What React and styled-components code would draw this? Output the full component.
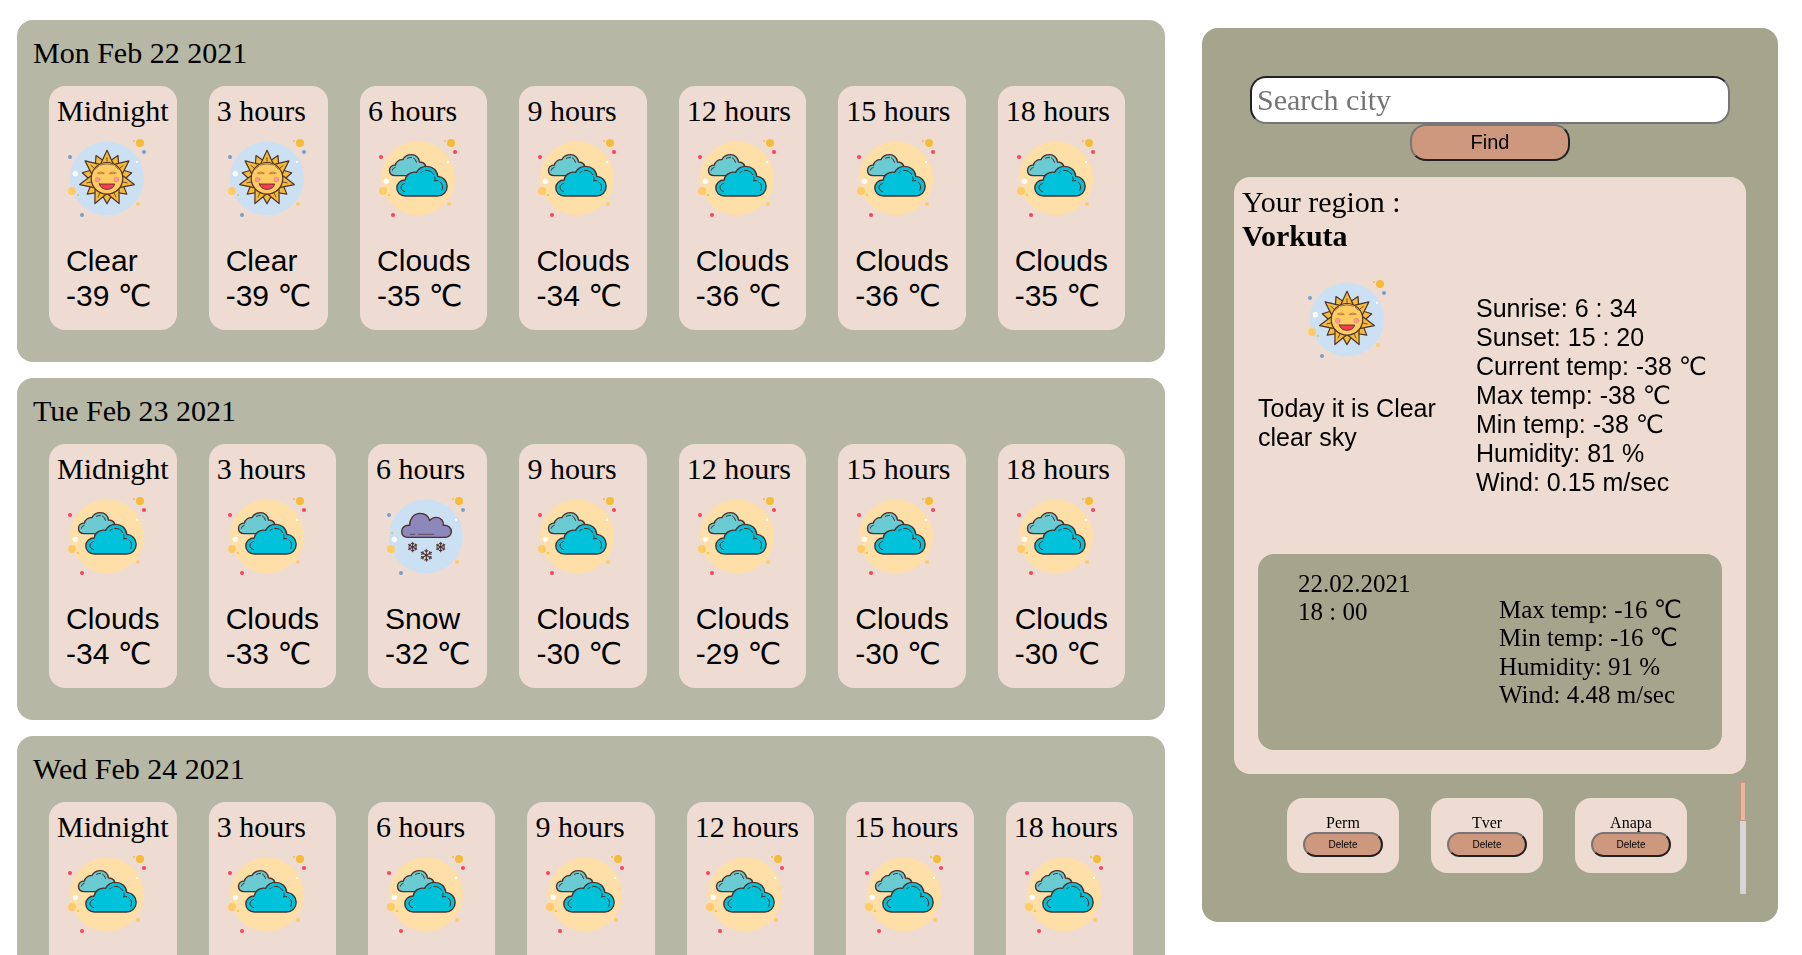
import React from "react";
import styled, { createGlobalStyle } from "styled-components";

const GlobalStyle = createGlobalStyle`
  * { box-sizing: border-box; }
  html, body { height: 100%; }
  body {
    margin: 0;
    background: #fff;
    color: #000;
    overflow: hidden;
    font-family: "Liberation Serif", "DejaVu Sans", serif;
    font-size: 30px;
  }
  p, h2, h3 { margin: 0; font-weight: 400; font-size: inherit; }
`;

const Page = styled.main`
  display: flex;
  align-items: flex-start;
  gap: 37px;
  height: 955px;
  padding: 20px 0 0 17px;
  overflow: hidden;
`;

const Forecast = styled.div`
  display: flex;
  flex-direction: column;
  gap: 16px;
  width: 1148px;
`;

const Day = styled.section`
  height: 342px;
  flex: none;
  padding: 16px;
  border-radius: 16px;
  background: #b6b7a5;
`;

const DayTitle = styled.h2`
  line-height: 34px;
`;

const Hours = styled.div`
  display: flex;
  gap: 32px;
  margin: 16px 0 0 16px;
`;

const HourCard = styled.article`
  height: 244px;
  padding: 8px;
  border-radius: 16px;
  background: #eedcd2;
`;

const HourLabel = styled.h3`
  line-height: 34px;
  white-space: nowrap;
`;

const Picture = styled.svg`
  display: block;
  width: 100px;
  height: 100px;
  flex: none;
`;

const HourPicture = styled(Picture)`
  margin: 2px 0 13px 3px;
`;

const HourText = styled.div`
  padding: 0 9px;
  font-family: "Liberation Sans", "DejaVu Sans", sans-serif;
  font-size: 30px;
  line-height: 35px;
  white-space: nowrap;
`;

const Side = styled.aside`
  display: flex;
  flex-direction: column;
  align-items: center;
  width: 576px;
  height: 894px;
  margin-top: 8px;
  padding-top: 48px;
  border-radius: 16px;
  background: #a5a58e;
  will-change: transform;
`;

const SearchInput = styled.input`
  width: 480px;
  height: 48px;
  padding: 1px 5px;
  border: 2px inset #767676;
  border-radius: 16px;
  background: #fff;
  font-family: "Liberation Serif", serif;
  font-size: 30px;
  &::placeholder { color: #757575; }
`;

const Button = styled.button`
  width: ${(p) => (p.$small ? 80 : 160)}px;
  height: ${(p) => (p.$small ? 25 : 37)}px;
  padding: 1px 6px;
  border: 2px outset #767676;
  border-radius: 16px;
  background: #ce987e;
  color: #000;
  font-family: "Liberation Sans", sans-serif;
  font-size: ${(p) => (p.$small ? 10 : 20)}px;
`;

const Current = styled.section`
  width: 512px;
  height: 597px;
  margin-top: 16px;
  padding: 8px;
  border-radius: 16px;
  background: #eedcd2;
`;

const Region = styled.p`
  line-height: 34px;
  strong { display: block; }
`;

const CurrentBody = styled.div`
  display: flex;
  height: 301px;
  padding: 0 16px;
  font-family: "Liberation Sans", "DejaVu Sans", sans-serif;
  font-size: 25px;
  line-height: 29px;
`;

const Summary = styled.div`
  width: 218px;
  padding-top: 18px;
`;

const SummaryPicture = styled(Picture)`
  margin: 0 0 23px 42px;
`;

const Stats = styled.div`
  padding-top: 41px;
  white-space: nowrap;
`;

const Later = styled.section`
  display: flex;
  width: 464px;
  height: 196px;
  margin: 0 16px;
  padding: 16px 0 0 40px;
  border-radius: 16px;
  background: #a5a58e;
  font-size: 25px;
  line-height: 28px;
`;

const LaterDate = styled.div`
  width: 201px;
`;

const LaterStats = styled.div`
  padding-top: 26px;
  line-height: 28.4px;
  white-space: nowrap;
`;

const Cities = styled.div`
  display: flex;
  align-items: flex-start;
  width: 512px;
  height: 112px;
  margin-top: 8px;
  padding-left: 53px;
`;

const CityList = styled.div`
  display: flex;
  gap: 32px;
  flex: 1;
  padding-top: 16px;
`;

const City = styled.article`
  display: flex;
  flex-direction: column;
  align-items: center;
  width: 112px;
  height: 75px;
  padding-top: 16px;
  border-radius: 16px;
  background: #eedcd2;
  font-size: 16px;
  line-height: 18px;
`;

const ScrollTrack = styled.div`
  width: 6px;
  height: 112px;
  background: #dedede;
  box-shadow: inset 0 0 5px rgba(0, 0, 0, 0.1);
`;

const ScrollThumb = styled.div`
  height: 39px;
  border: 1px solid #d09276;
  background: #e0baa8;
`;

const INK = "#4e302c";
const CX = 141;
const CY = 145;

const polar = (angle, radius) => {
  const a = (angle * Math.PI) / 180;
  return `${(CX + radius * Math.sin(a)).toFixed(1)},${(CY - radius * Math.cos(a)).toFixed(1)}`;
};

const ray = (angle, tip, half) =>
  `M${polar(angle - half, 45)}L${polar(angle, tip)}L${polar(angle + half, 45)}Z`;

const Bubbles = ({ warm, dot }) => (
  <>
    <circle cx="141" cy="145" r="111" fill={warm ? "#ffdfa8" : "#cce0f4"} />
    <circle cx="240" cy="39" r="12" fill="#f5bc38" />
    <circle cx="222" cy="33" r="3" fill="#f5bc38" />
    <circle cx="252" cy="66" r="6" fill={dot} />
    <circle cx="30" cy="81" r="6" fill={dot} />
    <circle cx="66" cy="255" r="6" fill={dot} />
    <circle cx="36" cy="183" r="12" fill="#ffcb66" />
    <circle cx="234" cy="222" r="6" fill="#ffcb66" />
    <circle cx="231" cy="96" r="3.4" fill="#fff" />
  </>
);

const Sun = () => (
  <>
    <Bubbles dot="#759fd0" />
    <circle cx="46" cy="131" r="8" fill="#fff" />
    <circle cx="54" cy="195" r="3" fill="#f5bc38" />
    <g fill="#f5bc38" stroke={INK} strokeWidth="3.6" strokeLinejoin="round" strokeLinecap="round">
      {[0, 1, 2, 3, 4, 5, 6].map((i) => (
        <path key={i} d={ray(((i + 0.5) * 360) / 7, 76, 27)} />
      ))}
      {[0, 1, 2, 3, 4, 5, 6].map((i) => (
        <path key={i} d={ray((i * 360) / 7, 84, 27)} />
      ))}
      {[0, 1, 2, 3, 4, 5, 6].map((i) => (
        <path key={i} strokeWidth="2.4" d={`M${polar((i * 360) / 7, 50)}L${polar((i * 360) / 7, 62)}`} />
      ))}
      <circle cx="141" cy="145" r="47.5" fill="#ffcb63" />
    </g>
    <g fill="none" stroke={INK} strokeLinecap="round">
      <path strokeWidth="1.8" d="M106 118q5-7 11-10M121 105q20-7 40 0M166 109q6 4 9 9" />
      <path strokeWidth="2.4" stroke="#a8722f" d="M112 129q10-7 20 0M149 129q10-7 20 0M116 131h16M149 131h16" />
      <circle cx="113" cy="149" r="7" fill="#ff96a0" stroke="#c98068" strokeWidth="1.6" />
      <circle cx="169" cy="149" r="7" fill="#ff96a0" stroke="#c98068" strokeWidth="1.6" />
      <path d="M118 162h46q-5 16-23 16t-23-16z" fill="#fd3c4f" strokeWidth="2.6" strokeLinejoin="round" />
    </g>
  </>
);

const Clouds = () => (
  <>
    <Bubbles warm dot="#ff4058" />
    <circle cx="46" cy="154" r="8" fill="#fff" />
    <circle cx="54" cy="195" r="3" fill="#f5bc38" />
    <g transform="translate(-3.5 0)" stroke={INK} strokeWidth="4.2" strokeLinejoin="round" strokeLinecap="round">
      <path
        fill="#6bcbd3"
        d="M76 137c-11 0-17-7-17-16 0-9 7-16 18-16 1-10 12-17 22-16 5-9 15-15 26-15 13 0 23 9 24 22 9 0 15 4 18 10l-20 31z"
      />
      <path
        fill="#00c3db"
        d="M107 198c-15 0-26-10-26-24 0-14 11-24 25-24 2-15 17-26 34-23 6-11 17-18 30-18 18 0 32 11 34 30 16 1 28 14 28 30 0 17-12 29-29 29z"
      />
      <g fill="none" strokeWidth="3">
        <path d="M67 121q1-7 9-9M113 85q5-3 12-3M131 84q7 3 9 13" />
        <path d="M105 160q-14 4-11 16 3 8 10 9M153 128q3-3 7-4M167 121q18-1 25 13M195 141q2 8 0 12M196 152h8M211 156q12 9 5 25" />
      </g>
    </g>
  </>
);

const Flake = ({ x, y, r }) => (
  <g transform={`translate(${x} ${y})`}>
    {[0, 60, 120].map((a) => (
      <path
        key={a}
        transform={`rotate(${a})`}
        d={`M0 ${-r}V${r}M${-r * 0.25} ${-r * 0.8}L0 ${-r * 0.56}L${r * 0.25} ${-r * 0.8}M${-r * 0.25} ${r * 0.8}L0 ${r * 0.56}L${r * 0.25} ${r * 0.8}`}
      />
    ))}
  </g>
);

const Snow = () => (
  <>
    <Bubbles dot="#759fd0" />
    <circle cx="46" cy="154" r="8" fill="#fff" />
    <circle cx="39" cy="135" r="3" fill="#f5bc38" />
    <g transform="translate(-12 0)" fill="none" stroke={INK} strokeLinecap="round" strokeLinejoin="round">
      <path
        fill="#8c88bb"
        strokeWidth="4.2"
        d="M98 148c-11 0-18-7-18-18 0-12 11-20 24-18 0-20 13-36 31-36 15 0 26 9 29 22 5-7 12-10 20-10 13 0 23 11 21 24 14-1 24 7 24 19 0 10-8 17-18 17z"
      />
      <path strokeWidth="2" d="M106 139h13M130 139h46" />
      <g strokeWidth="3.2">
        <Flake x={113} y={177} r={14} />
        <Flake x={197} y={177} r={14} />
        <Flake x={154} y={202} r={18} />
      </g>
    </g>
  </>
);

const ART = { Clear: Sun, Clouds, Snow };

const hourNames = ["Midnight", "3 hours", "6 hours", "9 hours", "12 hours", "15 hours", "18 hours"];

const days = [
  {
    date: "Mon Feb 22 2021",
    sky: ["Clear", "Clear", "Clouds", "Clouds", "Clouds", "Clouds", "Clouds"],
    temps: [-39, -39, -35, -34, -36, -36, -35],
  },
  {
    date: "Tue Feb 23 2021",
    sky: ["Clouds", "Clouds", "Snow", "Clouds", "Clouds", "Clouds", "Clouds"],
    temps: [-34, -33, -32, -30, -29, -30, -30],
  },
  {
    date: "Wed Feb 24 2021",
    sky: ["Clouds", "Clouds", "Clouds", "Clouds", "Clouds", "Clouds", "Clouds"],
    temps: [-30, -30, -29, -28, -27, -27, -28],
  },
];

export default function App() {
  return (
    <>
      <GlobalStyle />
      <Page>
        <Forecast>
          {days.map((day) => (
            <Day key={day.date}>
              <DayTitle>{day.date}</DayTitle>
              <Hours>
                {hourNames.map((name, i) => {
                  const Art = ART[day.sky[i]];
                  return (
                    <HourCard key={name}>
                      <HourLabel>{name}</HourLabel>
                      <HourPicture viewBox="0 0 300 300">
                        <Art />
                      </HourPicture>
                      <HourText>
                        <p>{day.sky[i]}</p>
                        <p>{day.temps[i]} ℃</p>
                      </HourText>
                    </HourCard>
                  );
                })}
              </Hours>
            </Day>
          ))}
        </Forecast>
        <Side>
          <SearchInput placeholder="Search city" />
          <Button>Find</Button>
          <Current>
            <Region>
              Your region :<strong>Vorkuta</strong>
            </Region>
            <CurrentBody>
              <Summary>
                <SummaryPicture viewBox="0 0 300 300">
                  <Sun />
                </SummaryPicture>
                <p>Today it is Clear</p>
                <p>clear sky</p>
              </Summary>
              <Stats>
                <p>Sunrise: 6 : 34</p>
                <p>Sunset: 15 : 20</p>
                <p>Current temp: -38 ℃</p>
                <p>Max temp: -38 ℃</p>
                <p>Min temp: -38 ℃</p>
                <p>Humidity: 81 %</p>
                <p>Wind: 0.15 m/sec</p>
              </Stats>
            </CurrentBody>
            <Later>
              <LaterDate>
                <p>22.02.2021</p>
                <p>18 : 00</p>
              </LaterDate>
              <LaterStats>
                <p>Max temp: -16 ℃</p>
                <p>Min temp: -16 ℃</p>
                <p>Humidity: 91 %</p>
                <p>Wind: 4.48 m/sec</p>
              </LaterStats>
            </Later>
          </Current>
          <Cities>
            <CityList>
              {["Perm", "Tver", "Anapa"].map((name) => (
                <City key={name}>
                  <p>{name}</p>
                  <Button $small>Delete</Button>
                </City>
              ))}
            </CityList>
            <ScrollTrack>
              <ScrollThumb />
            </ScrollTrack>
          </Cities>
        </Side>
      </Page>
    </>
  );
}
